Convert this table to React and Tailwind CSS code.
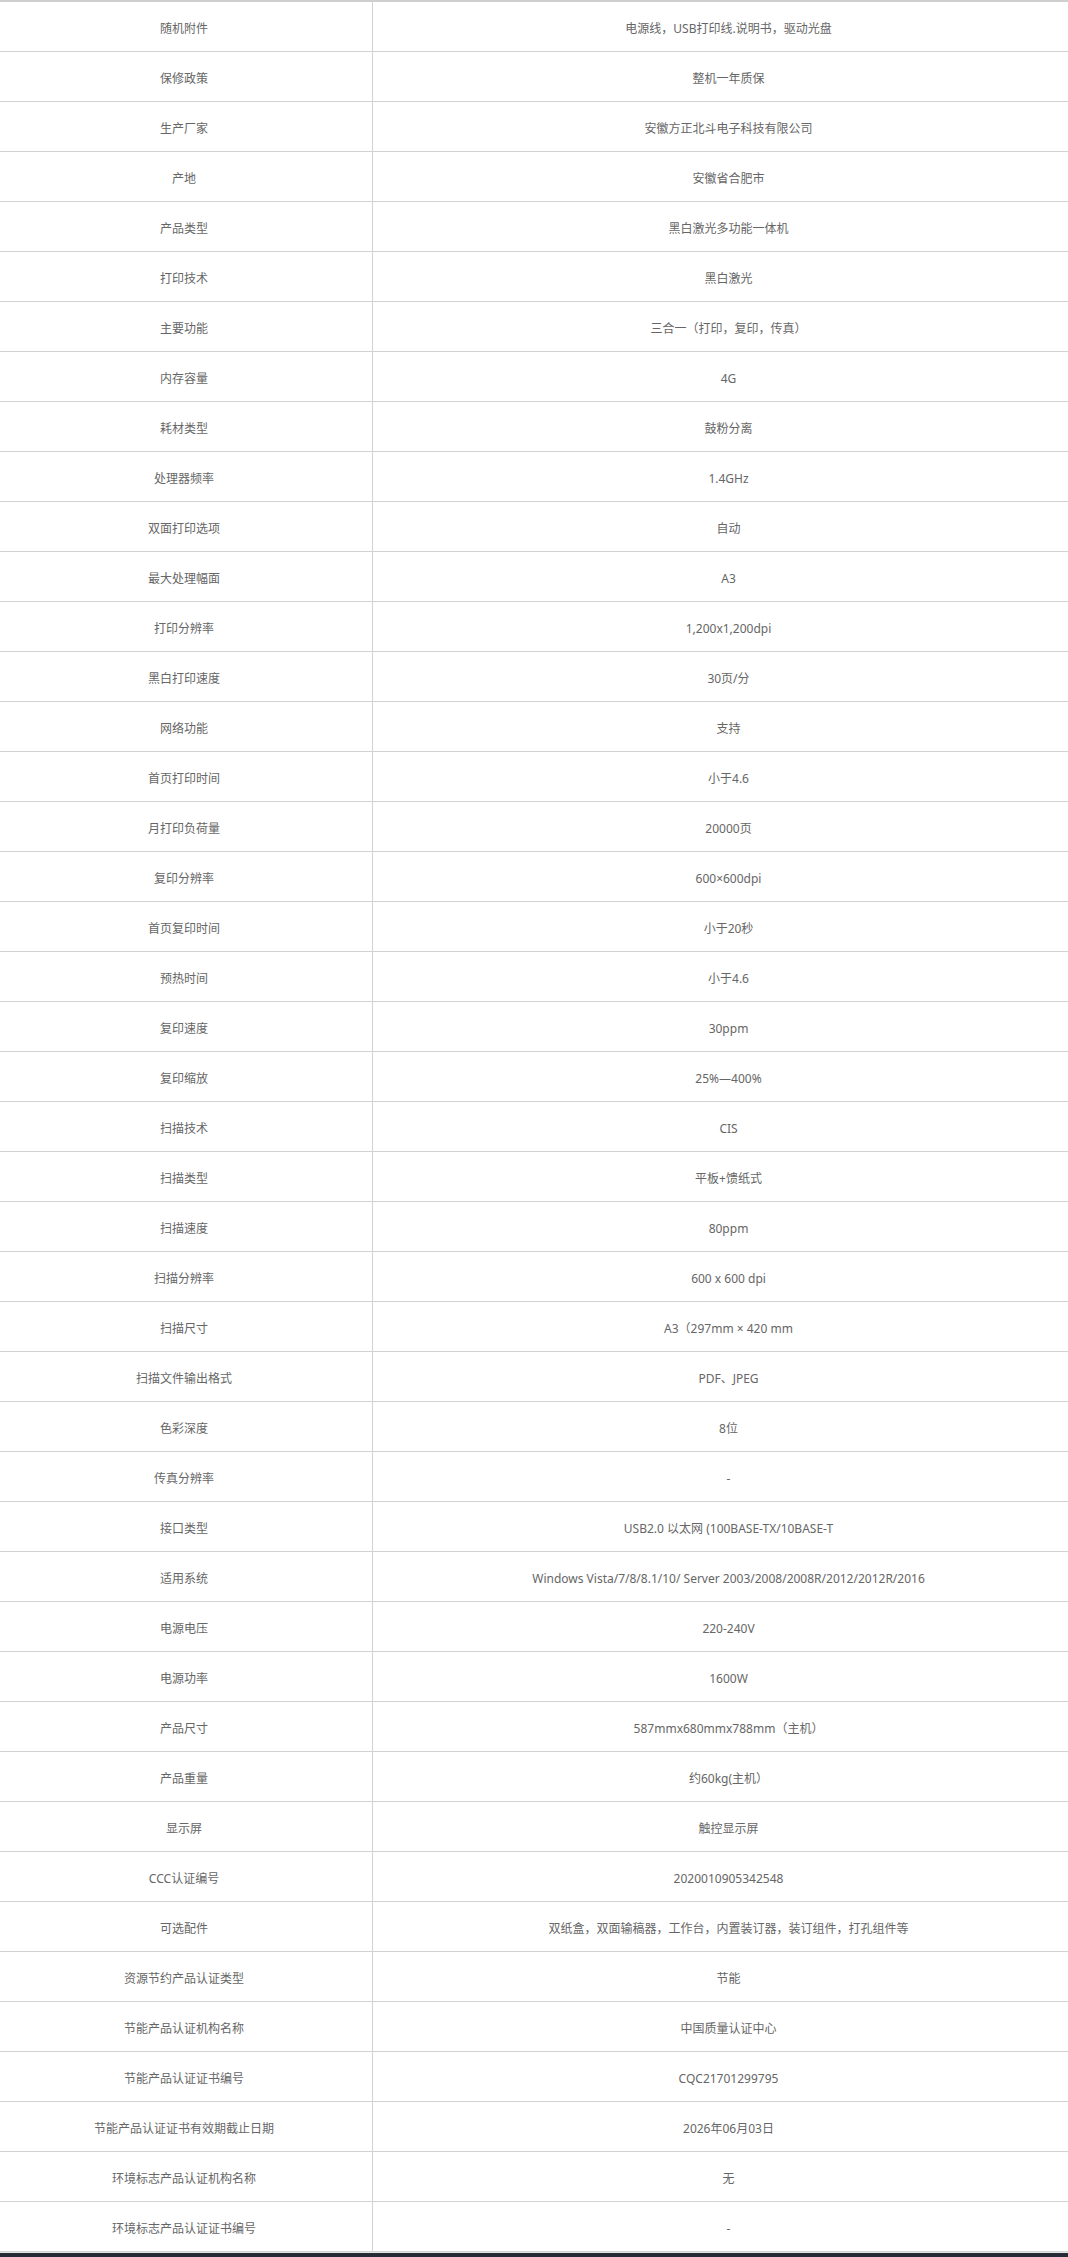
import React from "react";

const specs = [
  ["随机附件", "电源线，USB打印线.说明书，驱动光盘"],
  ["保修政策", "整机一年质保"],
  ["生产厂家", "安徽方正北斗电子科技有限公司"],
  ["产地", "安徽省合肥市"],
  ["产品类型", "黑白激光多功能一体机"],
  ["打印技术", "黑白激光"],
  ["主要功能", "三合一（打印，复印，传真）"],
  ["内存容量", "4G"],
  ["耗材类型", "鼓粉分离"],
  ["处理器频率", "1.4GHz"],
  ["双面打印选项", "自动"],
  ["最大处理幅面", "A3"],
  ["打印分辨率", "1,200x1,200dpi"],
  ["黑白打印速度", "30页/分"],
  ["网络功能", "支持"],
  ["首页打印时间", "小于4.6"],
  ["月打印负荷量", "20000页"],
  ["复印分辨率", "600×600dpi"],
  ["首页复印时间", "小于20秒"],
  ["预热时间", "小于4.6"],
  ["复印速度", "30ppm"],
  ["复印缩放", "25%—400%"],
  ["扫描技术", "CIS"],
  ["扫描类型", "平板+馈纸式"],
  ["扫描速度", "80ppm"],
  ["扫描分辨率", "600 x 600 dpi"],
  ["扫描尺寸", "A3（297mm × 420 mm"],
  ["扫描文件输出格式", "PDF、JPEG"],
  ["色彩深度", "8位"],
  ["传真分辨率", "-"],
  ["接口类型", "USB2.0 以太网 (100BASE-TX/10BASE-T"],
  ["适用系统", "Windows Vista/7/8/8.1/10/ Server 2003/2008/2008R/2012/2012R/2016"],
  ["电源电压", "220-240V"],
  ["电源功率", "1600W"],
  ["产品尺寸", "587mmx680mmx788mm（主机）"],
  ["产品重量", "约60kg(主机）"],
  ["显示屏", "触控显示屏"],
  ["CCC认证编号", "2020010905342548"],
  ["可选配件", "双纸盒，双面输稿器，工作台，内置装订器，装订组件，打孔组件等"],
  ["资源节约产品认证类型", "节能"],
  ["节能产品认证机构名称", "中国质量认证中心"],
  ["节能产品认证证书编号", "CQC21701299795"],
  ["节能产品认证证书有效期截止日期", "2026年06月03日"],
  ["环境标志产品认证机构名称", "无"],
  ["环境标志产品认证证书编号", "-"],
];

const App = () => {
  return (
    <div className="w-[1068px] bg-white font-['Noto_Sans','Noto_Sans_CJK_SC',sans-serif] text-[12px] text-[#666]">
      <div className="border-t-2 border-[#cfcfcf]">
        {specs.map(([label, value]) => (
          <div key={label} className="flex h-[50px] border-b border-[#d2d2d2]">
            <div className="flex w-[373px] items-center justify-center border-r border-[#d2d2d2] pt-[5px] pr-[4px]">{label}</div>
            <div className="flex flex-1 items-center justify-center pt-[5px] pl-[16px]">{value}</div>
          </div>
        ))}
      </div>
      <div className="h-[5px] border-t border-[#e4e4e4] bg-[#262b35]" />
    </div>
  );
};

export default App;
